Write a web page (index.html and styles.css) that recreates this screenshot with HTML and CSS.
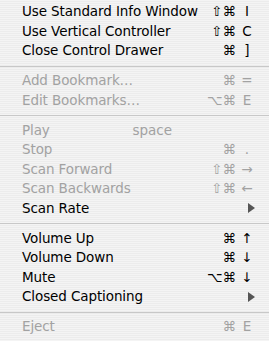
FILE: index.html
```html
<!DOCTYPE html>
<html>
<head>
<meta charset="utf-8">
<link rel="stylesheet" href="styles.css">
</head>
<body>
<ul class="menu">
  <li class="item"><span class="label">Use Standard Info Window</span><span class="sc"><span class="mods">⇧⌘</span><span class="key">I</span></span></li>
  <li class="item"><span class="label">Use Vertical Controller</span><span class="sc"><span class="mods">⇧⌘</span><span class="key">C</span></span></li>
  <li class="item"><span class="label">Close Control Drawer</span><span class="sc"><span class="mods">⌘</span><span class="key">]</span></span></li>
  <li class="sep"></li>
  <li class="item off"><span class="label">Add Bookmark…</span><span class="sc"><span class="mods">⌘</span><span class="key">=</span></span></li>
  <li class="item off"><span class="label">Edit Bookmarks…</span><span class="sc"><span class="mods">⌥⌘</span><span class="key">E</span></span></li>
  <li class="sep"></li>
  <li class="item off"><span class="label">Play</span><span class="named">space</span></li>
  <li class="item off"><span class="label">Stop</span><span class="sc"><span class="mods">⌘</span><span class="key">.</span></span></li>
  <li class="item off"><span class="label">Scan Forward</span><span class="sc"><span class="mods">⇧⌘</span><span class="key">→</span></span></li>
  <li class="item off"><span class="label">Scan Backwards</span><span class="sc"><span class="mods">⇧⌘</span><span class="key">←</span></span></li>
  <li class="item"><span class="label">Scan Rate</span><span class="sub"></span></li>
  <li class="sep"></li>
  <li class="item"><span class="label">Volume Up</span><span class="sc"><span class="mods">⌘</span><span class="key">↑</span></span></li>
  <li class="item"><span class="label">Volume Down</span><span class="sc"><span class="mods">⌘</span><span class="key">↓</span></span></li>
  <li class="item"><span class="label">Mute</span><span class="sc"><span class="mods">⌥⌘</span><span class="key">↓</span></span></li>
  <li class="item"><span class="label">Closed Captioning</span><span class="sub"></span></li>
  <li class="sep"></li>
  <li class="item off"><span class="label">Eject</span><span class="sc"><span class="mods">⌘</span><span class="key">E</span></span></li>
</ul>
</body>
</html>
```
FILE: styles.css
```css
html, body {
  margin: 0;
  padding: 0;
}
body {
  width: 269px;
  height: 341px;
  overflow: hidden;
  background: repeating-linear-gradient(to bottom, #f4f4f4 0, #f4f4f4 1px, #ececec 1px, #ececec 2px);
  font-family: "DejaVu Sans", "Liberation Sans", sans-serif;
  font-size: 13.5px;
  color: #000;
}
.menu {
  list-style: none;
  margin: 0;
  padding: 2px 0 0 0;
}
.item {
  height: 19.5px;
  line-height: 19.5px;
  display: flex;
  align-items: center;
  padding-left: 22px;
  white-space: nowrap;
}
.item.off {
  color: #a2a2a2;
}
.label {
  flex: 1;
  letter-spacing: -0.1px;
}
.sc {
  display: flex;
  width: 54px;
  margin-right: 11px;
}
.mods {
  flex: 1;
  text-align: right;
}
.key {
  width: 22px;
  text-align: center;
}
.named {
  margin-right: 97px;
}
.sub {
  width: 0;
  height: 0;
  border-top: 5px solid transparent;
  border-bottom: 5px solid transparent;
  border-left: 7px solid #555;
  margin-right: 14px;
}
.sep {
  height: 10.5px;
  display: flex;
  align-items: center;
}
.sep::before {
  content: "";
  display: block;
  width: 100%;
  height: 1px;
  background: #c8c8c8;
  margin-top: 1px;
}
```
